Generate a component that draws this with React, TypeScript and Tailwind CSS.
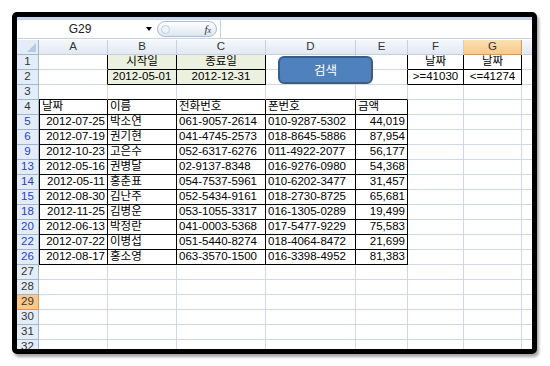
import React from "react";

type Align = "l" | "r" | "c";
type Cell = { t?: string; a?: Align; fill?: boolean };

const colLetters = ["A", "B", "C", "D", "E", "F", "G", ""];
const rowNums = ["1", "2", "3", "4", "5", "6", "9", "13", "14", "15", "18", "20", "22", "26", "27", "28", "29", "30", "31", "32"];

const records = [
  ["2012-07-25", "박소연", "061-9057-2614", "010-9287-5302", "44,019"],
  ["2012-07-19", "권기현", "041-4745-2573", "018-8645-5886", "87,954"],
  ["2012-10-23", "고은수", "052-6317-6276", "011-4922-2077", "56,177"],
  ["2012-05-16", "권병달", "02-9137-8348", "016-9276-0980", "54,368"],
  ["2012-05-11", "홍춘표", "054-7537-5961", "010-6202-3477", "31,457"],
  ["2012-08-30", "김난주", "052-5434-9161", "018-2730-8725", "65,681"],
  ["2012-11-25", "김병운", "053-1055-3317", "016-1305-0289", "19,499"],
  ["2012-06-13", "박정란", "041-0003-5368", "017-5477-9229", "75,583"],
  ["2012-07-22", "이병섭", "051-5440-8274", "018-4064-8472", "21,699"],
  ["2012-08-17", "홍소영", "063-3570-1500", "016-3398-4952", "81,383"],
];

function buildRows(): Cell[][] {
  const empty = (): Cell[] => Array.from({ length: 8 }, () => ({}));
  const rows: Cell[][] = [];
  const r1 = empty();
  r1[1] = { t: "시작일", a: "c", fill: true };
  r1[2] = { t: "종료일", a: "c", fill: true };
  r1[5] = { t: "날짜", a: "c" };
  r1[6] = { t: "날짜", a: "c" };
  rows.push(r1);
  const r2 = empty();
  r2[1] = { t: "2012-05-01", a: "c", fill: true };
  r2[2] = { t: "2012-12-31", a: "c", fill: true };
  r2[5] = { t: ">=41030", a: "c" };
  r2[6] = { t: "<=41274", a: "c" };
  rows.push(r2);
  rows.push(empty());
  const r4 = empty();
  ["날짜", "이름", "전화번호", "폰번호", "금액"].forEach((t, i) => (r4[i] = { t, a: "l" }));
  rows.push(r4);
  records.forEach((rec) => {
    const r = empty();
    rec.forEach((t, i) => (r[i] = { t, a: i === 0 || i === 4 ? "r" : "l" }));
    rows.push(r);
  });
  while (rows.length < rowNums.length) rows.push(empty());
  return rows;
}

const rows = buildRows();

// regions with thin black borders: [rowFrom, rowTo, colFrom, colTo]
const regions = [
  [0, 1, 1, 2],
  [0, 1, 5, 6],
  [3, 13, 0, 4],
];
const boxed = (r: number, c: number) =>
  regions.some(([r0, r1, c0, c1]) => r >= r0 && r <= r1 && c >= c0 && c <= c1);

const grid = "grid grid-cols-[22px_69px_69px_89px_90px_52px_56px_58px_20px]";

function Corner() {
  return (
    <div className="h-[15px] border-r border-b border-[#9eb6ce] bg-[#e4ecf7] flex items-end justify-end p-[2px]">
      <div className="w-0 h-0 border-l-[9px] border-l-transparent border-b-[9px] border-b-[#b6c9e2]" />
    </div>
  );
}

export default function App() {
  return (
    <div className="w-[550px] h-[366px] bg-white font-['Liberation_Sans','Noto_Sans_CJK_KR',sans-serif] text-[11.5px] text-black">
      <div className="ml-[12px] mt-[12px] w-[525px] h-[342px] border-[5px] border-black rounded-[5px] overflow-hidden bg-white shadow-[2px_3px_3px_rgba(0,0,0,0.35)]">
        {/* formula bar */}
        <div className="h-[23px] flex flex-col bg-white">
          <div className="h-[3px] bg-[#c5d6ec]" />
          <div className="h-[19px] flex items-center border-b border-[#c5d2e3]">
            <div className="w-[126px] text-center text-[12px] text-[#222]">G29</div>
            <div className="w-[12px] flex justify-center">
              <div className="w-0 h-0 border-l-[3px] border-r-[3px] border-t-[4px] border-l-transparent border-r-transparent border-t-black" />
            </div>
            <div className="ml-[2px] w-[60px] h-[16px] rounded-full border border-[#a9bdd6] bg-gradient-to-b from-[#ffffff] to-[#dce6f2] flex items-center justify-between px-[3px]">
              <div className="w-[9px] h-[9px] rounded-full border border-[#c0cfe2] bg-[#eef3f9]" />
              <span className="font-['Liberation_Serif',serif] italic text-[11px] text-[#333] pr-[2px]">
                f<span className="text-[8px]">x</span>
              </span>
            </div>
            <div className="ml-[3px] flex-1 h-full border-l border-[#c5d2e3]" />
          </div>
        </div>

        {/* column headers */}
        <div className={grid}>
          <Corner />
          {colLetters.map((l, i) => (
            <div
              key={i}
              className={
                l === "G"
                  ? "h-[15px] flex items-center justify-center border-r border-b border-[#f29436] bg-gradient-to-b from-[#fbe1b3] to-[#f8c98b] text-[#333]"
                  : "h-[15px] flex items-center justify-center border-r border-b border-[#c1d0e2] bg-gradient-to-b from-[#f5f8fc] to-[#e2e9f3] text-[#333]"
              }
            >
              {l}
            </div>
          ))}
        </div>

        {/* rows */}
        {rows.map((cells, r) => {
          const n = rowNums[r];
          const num = parseInt(n, 10);
          const filtered = num >= 5 && num <= 26;
          const selected = n === "29";
          return (
            <div key={n} className={grid}>
              <div
                className={
                  selected
                    ? "h-[15px] flex items-center justify-center border-r border-b border-[#f29436] bg-[#f9c98c] text-[#333]"
                    : filtered
                    ? "h-[15px] flex items-center justify-center border-r border-b border-[#9eb6ce] bg-[#e4ecf7] text-[#1f3fd9]"
                    : "h-[15px] flex items-center justify-center border-r border-b border-[#9eb6ce] bg-[#e4ecf7] text-[#333]"
                }
              >
                {n}
              </div>
              {cells.map((cell, c) => {
                const rightBlack = boxed(r, c) || boxed(r, c + 1);
                const bottomBlack = boxed(r, c) || boxed(r + 1, c);
                const leftBlack = c === 0 && boxed(r, c);
                return (
                  <div
                    key={c}
                    className={[
                      "h-[15px] flex items-center px-[2px] whitespace-nowrap overflow-hidden border-r border-b",
                      rightBlack ? "border-r-black" : "border-r-[#d0d7e5]",
                      bottomBlack ? "border-b-black" : "border-b-[#d0d7e5]",
                      leftBlack ? "border-l border-l-black" : "",
                      cell.fill ? "bg-[#ebf1de]" : "bg-white",
                      cell.a === "r" ? "justify-end" : cell.a === "c" ? "justify-center" : "justify-start",
                    ].join(" ")}
                  >
                    {cell.t}
                  </div>
                );
              })}
            </div>
          );
        })}
      </div>

      {/* search button shape */}
      <div className="absolute left-[278px] top-[56px] w-[95px] h-[28px] rounded-[6px] border-2 border-[#385d8a] bg-[#4f81bd] flex items-center justify-center text-white text-[12.5px] font-['Noto_Sans_CJK_KR',sans-serif]">
        검색
      </div>
    </div>
  );
}
